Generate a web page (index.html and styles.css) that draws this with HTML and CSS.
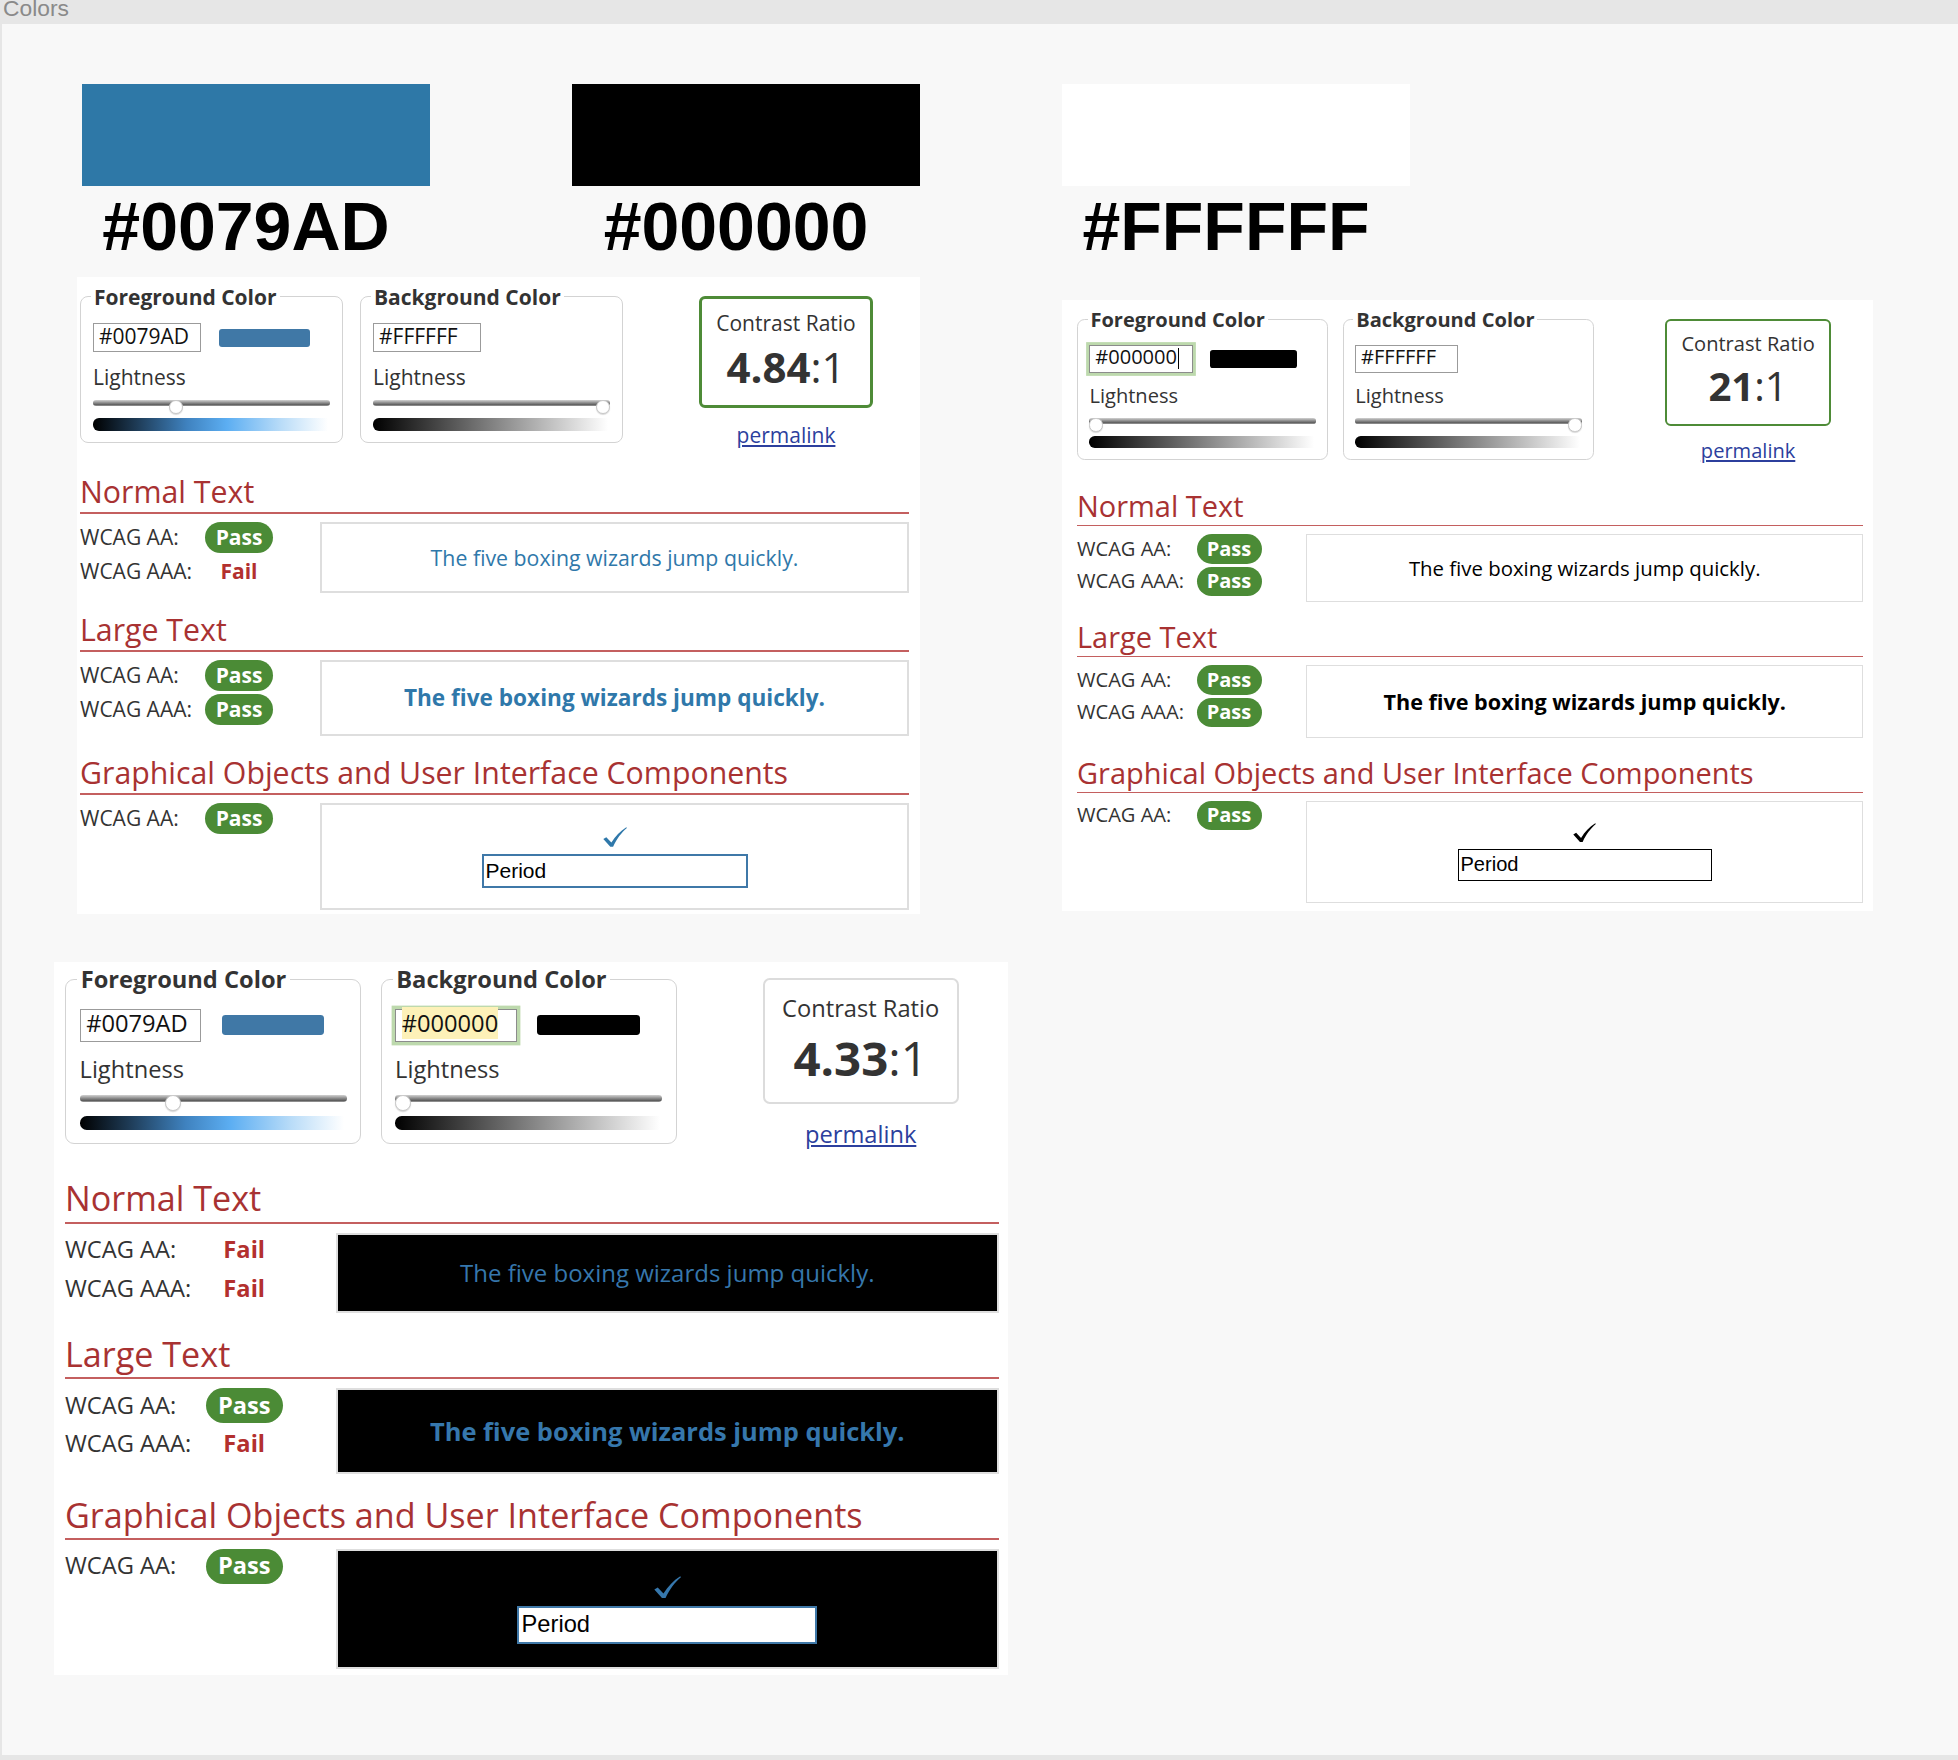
FILE: index.html
```html
<!DOCTYPE html>
<html lang="en">
<head>
<meta charset="utf-8">
<title>Colors</title>
<link rel="stylesheet" href="styles.css">
</head>
<body>
<header class="topbar">Colors</header>
<main class="canvas">
  <div class="top-row">
    <div class="story story-a">
      <div class="swatches">
        <div class="swatch-block">
          <div class="swatch swatch-blue"></div>
          <div class="swatch-label">#0079AD</div>
        </div>
        <div class="swatch-block">
          <div class="swatch swatch-black"></div>
          <div class="swatch-label">#000000</div>
        </div>
      </div>

      <section class="card card-a th-a">
        <div class="controls">
          <fieldset class="picker">
            <legend>Foreground Color</legend>
            <div class="hex-row">
              <div class="hex">#0079AD</div>
              <span class="chip chip-blue"></span>
            </div>
            <div class="light-label">Lightness</div>
            <div class="slider"><div class="track"></div><span class="thumb" style="left:calc(34% - 4.76px)"></span></div>
            <div class="grad grad-blue"></div>
          </fieldset>
          <fieldset class="picker">
            <legend>Background Color</legend>
            <div class="hex-row">
              <div class="hex">#FFFFFF</div>
            </div>
            <div class="light-label">Lightness</div>
            <div class="slider"><div class="track"></div><span class="thumb" style="left:calc(100% - 14px)"></span></div>
            <div class="grad grad-gray"></div>
          </fieldset>
          <div class="ratio-col">
            <div class="ratio ratio-pass">
              <div class="ratio-title">Contrast Ratio</div>
              <div class="ratio-value"><b>4.84</b>:1</div>
            </div>
            <a class="permalink" href="#">permalink</a>
          </div>
        </div>

        <h2 class="sec-title">Normal Text</h2>
        <div class="result">
          <div class="checks">
            <div class="check"><span class="lbl">WCAG AA:</span><span class="pill pass">Pass</span></div>
            <div class="check"><span class="lbl">WCAG AAA:</span><span class="pill fail">Fail</span></div>
          </div>
          <div class="sample sample-normal">The five boxing wizards jump quickly.</div>
        </div>

        <h2 class="sec-title next">Large Text</h2>
        <div class="result">
          <div class="checks">
            <div class="check"><span class="lbl">WCAG AA:</span><span class="pill pass">Pass</span></div>
            <div class="check"><span class="lbl">WCAG AAA:</span><span class="pill pass">Pass</span></div>
          </div>
          <div class="sample sample-large">The five boxing wizards jump quickly.</div>
        </div>

        <h2 class="sec-title next">Graphical Objects and User Interface Components</h2>
        <div class="result">
          <div class="checks">
            <div class="check"><span class="lbl">WCAG AA:</span><span class="pill pass">Pass</span></div>
          </div>
          <div class="sample sample-ui">
            <svg class="tick" viewBox="0 0 24 20" aria-hidden="true"><path d="M0.3 12 L3.3 10.2 L8.4 15.6 C12.4 9.2 17 4.2 23.3 0.2 L23.9 1 C18.2 5.9 13.9 11.5 10.1 19.8 L7.3 19.8 Z"/></svg>
            <div class="period">Period</div>
          </div>
        </div>
      </section>
    </div>

    <div class="story story-b">
      <div class="swatch-block">
        <div class="swatch swatch-white"></div>
        <div class="swatch-label">#FFFFFF</div>
      </div>

      <section class="card card-b th-b">
        <div class="controls">
          <fieldset class="picker">
            <legend>Foreground Color</legend>
            <div class="hex-row">
              <div class="hex is-focused">#000000<span class="caret"></span></div>
              <span class="chip chip-black"></span>
            </div>
            <div class="light-label">Lightness</div>
            <div class="slider"><div class="track"></div><span class="thumb" style="left:0"></span></div>
            <div class="grad grad-gray"></div>
          </fieldset>
          <fieldset class="picker">
            <legend>Background Color</legend>
            <div class="hex-row">
              <div class="hex">#FFFFFF</div>
            </div>
            <div class="light-label">Lightness</div>
            <div class="slider"><div class="track"></div><span class="thumb" style="left:calc(100% - 14px)"></span></div>
            <div class="grad grad-gray"></div>
          </fieldset>
          <div class="ratio-col">
            <div class="ratio ratio-pass">
              <div class="ratio-title">Contrast Ratio</div>
              <div class="ratio-value"><b>21</b>:1</div>
            </div>
            <a class="permalink" href="#">permalink</a>
          </div>
        </div>

        <h2 class="sec-title">Normal Text</h2>
        <div class="result">
          <div class="checks">
            <div class="check"><span class="lbl">WCAG AA:</span><span class="pill pass">Pass</span></div>
            <div class="check"><span class="lbl">WCAG AAA:</span><span class="pill pass">Pass</span></div>
          </div>
          <div class="sample sample-normal">The five boxing wizards jump quickly.</div>
        </div>

        <h2 class="sec-title next">Large Text</h2>
        <div class="result">
          <div class="checks">
            <div class="check"><span class="lbl">WCAG AA:</span><span class="pill pass">Pass</span></div>
            <div class="check"><span class="lbl">WCAG AAA:</span><span class="pill pass">Pass</span></div>
          </div>
          <div class="sample sample-large">The five boxing wizards jump quickly.</div>
        </div>

        <h2 class="sec-title next">Graphical Objects and User Interface Components</h2>
        <div class="result">
          <div class="checks">
            <div class="check"><span class="lbl">WCAG AA:</span><span class="pill pass">Pass</span></div>
          </div>
          <div class="sample sample-ui">
            <svg class="tick" viewBox="0 0 24 20" aria-hidden="true"><path d="M0.3 12 L3.3 10.2 L8.4 15.6 C12.4 9.2 17 4.2 23.3 0.2 L23.9 1 C18.2 5.9 13.9 11.5 10.1 19.8 L7.3 19.8 Z"/></svg>
            <div class="period">Period</div>
          </div>
        </div>
      </section>
    </div>
  </div>

  <div class="story story-c">
    <section class="card card-c th-c">
      <div class="controls">
        <fieldset class="picker">
          <legend>Foreground Color</legend>
          <div class="hex-row">
            <div class="hex">#0079AD</div>
            <span class="chip chip-blue"></span>
          </div>
          <div class="light-label">Lightness</div>
          <div class="slider"><div class="track"></div><span class="thumb" style="left:calc(34% - 4.76px)"></span></div>
          <div class="grad grad-blue"></div>
        </fieldset>
        <fieldset class="picker">
          <legend>Background Color</legend>
          <div class="hex-row">
            <div class="hex is-focused"><span class="hl">#000000</span></div>
            <span class="chip chip-black"></span>
          </div>
          <div class="light-label">Lightness</div>
          <div class="slider"><div class="track"></div><span class="thumb" style="left:0"></span></div>
          <div class="grad grad-gray"></div>
        </fieldset>
        <div class="ratio-col">
          <div class="ratio ratio-neutral">
            <div class="ratio-title">Contrast Ratio</div>
            <div class="ratio-value"><b>4.33</b>:1</div>
          </div>
          <a class="permalink" href="#">permalink</a>
        </div>
      </div>

      <h2 class="sec-title">Normal Text</h2>
      <div class="result">
        <div class="checks">
          <div class="check"><span class="lbl">WCAG AA:</span><span class="pill fail">Fail</span></div>
          <div class="check"><span class="lbl">WCAG AAA:</span><span class="pill fail">Fail</span></div>
        </div>
        <div class="sample sample-normal">The five boxing wizards jump quickly.</div>
      </div>

      <h2 class="sec-title next">Large Text</h2>
      <div class="result">
        <div class="checks">
          <div class="check"><span class="lbl">WCAG AA:</span><span class="pill pass">Pass</span></div>
          <div class="check"><span class="lbl">WCAG AAA:</span><span class="pill fail">Fail</span></div>
        </div>
        <div class="sample sample-large">The five boxing wizards jump quickly.</div>
      </div>

      <h2 class="sec-title next">Graphical Objects and User Interface Components</h2>
      <div class="result">
        <div class="checks">
          <div class="check"><span class="lbl">WCAG AA:</span><span class="pill pass">Pass</span></div>
        </div>
        <div class="sample sample-ui">
          <svg class="tick" viewBox="0 0 24 20" aria-hidden="true"><path d="M0.3 12 L3.3 10.2 L8.4 15.6 C12.4 9.2 17 4.2 23.3 0.2 L23.9 1 C18.2 5.9 13.9 11.5 10.1 19.8 L7.3 19.8 Z"/></svg>
          <div class="period">Period</div>
        </div>
      </div>
    </section>
  </div>
</main>
</body>
</html>
```

FILE: styles.css
```css
* { box-sizing: border-box; }
html, body { margin: 0; padding: 0; }
body {
  width: 1958px;
  height: 1760px;
  overflow: hidden;
  background: #e6e6e6;
  font-family: "Open Sans", "DejaVu Sans", sans-serif;
  color: #333;
}

.topbar {
  height: 24px;
  padding-left: 3px;
  font-family: "Liberation Sans", Arial, sans-serif;
  font-size: 22.8px;
  line-height: 17px;
  color: #8a8a8a;
  overflow: hidden;
}

.canvas {
  display: block;
  margin-left: 2px;
  height: 1731px;
  background: #f8f8f8;
  padding-top: 60px;
}

.top-row {
  display: flex;
  align-items: flex-start;
  gap: 142px;
  padding-left: 75px;
}
.story-a { width: 843px; }
.story-b { width: 811px; }
.story-c { margin: 48px 0 0 52px; }

.swatches {
  display: flex;
  justify-content: space-between;
  padding-left: 5px;
}
.swatch-block { width: 348px; }
.swatch { height: 102px; }
.swatch-blue { background: #2e78a7; }
.swatch-black { background: #000; }
.swatch-white { background: #fff; }
.swatch-label {
  margin-top: 6.4px;
  padding-right: 20px;
  text-align: center;
  font-family: "Liberation Sans", Arial, sans-serif;
  font-weight: 700;
  font-size: 68px;
  line-height: 68px;
  color: #000;
  white-space: nowrap;
}

/* cards */
.card { background: #fff; }
.card-a { width: 843px; margin-top: 16.6px; padding: 5.7px 11px 4px 3px; }
.card-b { zoom: 0.956; width: 848.3px; margin-top: 41.4px; padding: 6.6px 10.5px 8.4px 15.7px; }
.card-c { zoom: 1.127; width: 846.5px; padding: 1.1px 8px 5.3px 9.8px; }

.controls { display: flex; align-items: flex-start; }

.picker {
  width: 263px;
  min-width: 0;
  margin: 0;
  padding: 12px 12px 11px;
  border: 1px solid #d3d3d3;
  border-radius: 8px;
}
.picker + .picker { margin-left: 17px; }
.card-b .picker + .picker { margin-left: 15px; }
.picker legend {
  margin-left: -2px;
  padding: 0 3px;
  font-weight: 700;
  font-size: 21px;
  line-height: 28.6px;
  color: #333;
  white-space: nowrap;
}

.hex-row { display: flex; align-items: center; gap: 18px; height: 29px; }
.hex {
  width: 108px;
  height: 29px;
  flex: none;
  border: 1px solid #9b9b9b;
  background: #fff;
  padding-left: 5px;
  font-size: 21px;
  line-height: 24px;
  color: #111;
  white-space: nowrap;
}
.hex.is-focused { box-shadow: 0 0 0 3px #bdd9ad; border-color: #8c8c8c; }
.caret {
  display: inline-block;
  width: 1.5px;
  height: 22px;
  margin-left: 1px;
  background: #000;
  vertical-align: -5px;
}
.hl { background: #fdf1b8; }

.chip { width: 91px; height: 18px; border-radius: 3px; flex: none; }
.chip-blue { background: #4078a6; }
.chip-black { background: #000; }

.light-label { margin-top: 10.6px; font-size: 21px; line-height: 28px; }

.slider { position: relative; height: 14px; margin-top: 9.1px; }
.track {
  height: 6px;
  margin-top: 4px;
  border-radius: 3px;
  background: linear-gradient(#d2d2d2, #8f8f8f 45%, #5c5c5c 80%, #a8a8a8);
}
.thumb {
  position: absolute;
  top: 0;
  width: 14px;
  height: 14px;
  border-radius: 50%;
  background: #fff;
  border: 1px solid #c8c8c8;
  box-shadow: 0 1px 1px rgba(0, 0, 0, 0.15);
}

.grad { width: 235px; height: 13px; margin-top: 4px; border-radius: 6px 0 0 6px; }
.grad-blue { background: linear-gradient(to right, #000 0%, #1d3953 18%, #3f82bf 40%, #5caef2 57%, #b9dcf8 80%, #fff 100%); }
.grad-gray { background: linear-gradient(to right, #000, #fff); }

.ratio-col { margin-left: 76px; margin-top: 13.3px; width: 174px; flex: none; text-align: center; }
.card-b .ratio-col { margin-left: 74px; }
.ratio { height: 112px; border-radius: 6px; padding-top: 10px; background: #fff; }
.ratio-pass { border: 3px solid #4e8b37; }
.ratio-neutral { border: 2px solid #dcdcdc; padding-top: 11px; }
.ratio-title { font-size: 21px; line-height: 28px; }
.ratio-value { margin-top: 5px; font-size: 42px; line-height: 50px; }
.ratio-value b { font-weight: 700; }
.permalink {
  display: inline-block;
  margin-top: 13px;
  font-size: 21px;
  line-height: 28px;
  color: #2c3f9d;
  text-decoration: underline;
}

/* result sections */
.sec-title {
  margin: 22px 0 0;
  font-size: 30.3px;
  line-height: 41px;
  font-weight: 400;
  color: #a83232;
  border-bottom: 2px solid #c45f5f;
  white-space: nowrap;
}
.sec-title.next { margin-top: 16px; }

.result { display: flex; margin-top: 8px; }
.checks { width: 240px; flex: none; display: flex; flex-direction: column; gap: 3px; }
.check { display: flex; align-items: center; height: 31px; }
.lbl { width: 125px; flex: none; font-size: 21px; line-height: 28px; white-space: nowrap; }
.pill {
  width: 68px;
  height: 31px;
  border-radius: 16px;
  display: flex;
  align-items: center;
  justify-content: center;
  font-weight: 700;
  font-size: 21px;
  line-height: 28px;
}
.pill.pass { background: #4b8b36; color: #fff; }
.pill.fail { color: #b3302e; }

.sample {
  flex: 1;
  min-width: 0;
  display: flex;
  align-items: center;
  justify-content: center;
  border: 2px solid #dedede;
  white-space: nowrap;
}
.sample-normal { height: 71px; font-size: 21.3px; }
.sample-large { height: 76px; font-size: 22.6px; font-weight: 700; }
.sample-ui { height: 107px; flex-direction: column; justify-content: flex-start; padding-top: 22px; }

.tick { display: block; width: 24px; height: 20px; fill: currentColor; }
.period {
  margin-top: 7px;
  width: 266px;
  height: 34px;
  border: 2px solid;
  background: #fff;
  padding-left: 2px;
  font-family: "Liberation Sans", Arial, sans-serif;
  font-size: 21px;
  line-height: 30px;
  color: #000;
}

.th-a .sample { background: #fff; color: #2f78aa; }
.th-a .period { border-color: #3f78a8; }
.th-b .sample { background: #fff; color: #000; }
.th-b .period { border-color: #000; }
.th-c .sample { background: #000; color: #3677ac; }
.th-c .period { border-color: #3f78a8; }
```
